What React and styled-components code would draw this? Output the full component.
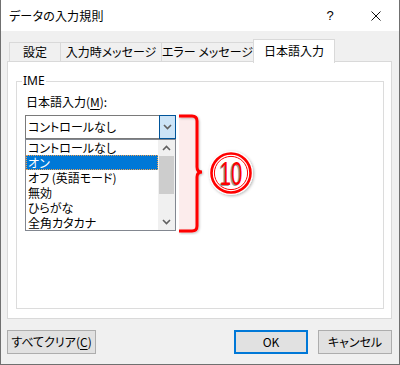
import React from "react";
import styled, { createGlobalStyle } from "styled-components";

const Global = createGlobalStyle`
  html, body { margin: 0; padding: 0; background: #fff; }
  * { box-sizing: border-box; }
  body {
    font-family: "Noto Sans CJK JP", "Noto Sans", sans-serif;
    font-size: 12px;
    color: #000;
    font-feature-settings: "palt";
  }
`;

const Window = styled.div`
  width: 400px;
  height: 365px;
  border: 1px solid #707070;
  border-top: none;
  display: flex;
  flex-direction: column;
  background: #f0f0f0;
`;

const TitleBar = styled.div`
  height: 31px;
  background: #fff;
  display: flex;
  align-items: center;
  padding-left: 8px;
`;

const Title = styled.div`
  flex: 1;
  font-size: 12px;
  line-height: 16px;
  letter-spacing: 0.2px;
`;

const CaptionButton = styled.div`
  width: 46px;
  height: 31px;
  display: flex;
  align-items: center;
  justify-content: center;
  font-family: "Liberation Sans", sans-serif;
  font-size: 13px;
`;

const Body = styled.div`
  flex: 1;
  display: flex;
  flex-direction: column;
  padding: 8px 7px 0 6px;
`;

const TabStrip = styled.div`
  display: flex;
  align-items: flex-end;
  height: 23px;
  padding-left: 2px;
`;

const Tab = styled.div`
  position: relative;
  width: ${(p) => p.$w}px;
  height: ${(p) => (p.$active ? 24 : 20)}px;
  margin-left: -1px;
  margin-bottom: ${(p) => (p.$active ? -1 : 0)}px;
  z-index: ${(p) => (p.$active ? 2 : 1)};
  background: ${(p) => (p.$active ? "#fff" : "#f0f0f0")};
  border: 1px solid #d9d9d9;
  border-bottom: ${(p) => (p.$active ? "none" : "1px solid #d9d9d9")};
  display: flex;
  align-items: ${(p) => (p.$active ? "flex-start" : "center")};
  justify-content: center;
  padding-top: ${(p) => (p.$active ? 3 : 0)}px;
  font-size: 12px;
  line-height: 16px;
  white-space: nowrap;
  &:first-child { margin-left: 0; }
`;

const Panel = styled.div`
  height: 258px;
  margin-top: -1px;
  background: #fff;
  border: 1px solid #d9d9d9;
  padding: 19px 7px 0 8px;
`;

const Group = styled.div`
  position: relative;
  height: 228px;
  border: 1px solid #dcdcdc;
  padding: 12px 8px 0 8px;
`;

const Legend = styled.div`
  position: absolute;
  top: -9px;
  left: 5px;
  padding: 0 1px;
  background: #fff;
  font-size: 12px;
  line-height: 16px;
  font-family: "Noto Sans", sans-serif;
`;

const FieldLabel = styled.div`
  padding-left: 1px;
  font-size: 12px;
  line-height: 16px;
  height: 16px;
  u { text-decoration: underline; text-underline-offset: 2px; }
`;

const ComboRow = styled.div`
  display: flex;
  align-items: flex-start;
  margin-top: 5px;
`;

const ComboCol = styled.div`
  width: 151px;
  display: flex;
  flex-direction: column;
`;

const Combo = styled.div`
  height: 24px;
  border: 1px solid #7a7a7a;
  background: #fff;
  display: flex;
  align-items: stretch;
`;

const ComboText = styled.div`
  flex: 1;
  padding-left: 2px;
  display: flex;
  align-items: center;
  font-size: 12px;
  line-height: 16px;
`;

const DropButton = styled.div`
  width: 17px;
  margin: -1px -1px -1px 0;
  background: #cce4f7;
  border: 1px solid #005499;
  display: flex;
  align-items: center;
  justify-content: center;
`;

const List = styled.div`
  height: 92px;
  border: 1px solid #828790;
  background: #fff;
  display: flex;
`;

const Items = styled.div`
  flex: 1;
  display: flex;
  flex-direction: column;
`;

const Item = styled.div`
  height: 15px;
  line-height: 15px;
  padding-left: 2px;
  font-size: 12px;
  white-space: nowrap;
  overflow: hidden;
  outline: ${(p) => (p.$selected ? "1px dotted #f0a050" : "none")};
  outline-offset: -1px;
  background: ${(p) => (p.$selected ? "#0078d7" : "transparent")};
  color: ${(p) => (p.$selected ? "#fff" : "#000")};
`;

const ScrollBar = styled.div`
  width: 17px;
  background: #f0f0f0;
  display: flex;
  flex-direction: column;
`;

const ScrollArrow = styled.div`
  height: 16px;
  display: flex;
  align-items: center;
  justify-content: center;
`;

const ScrollTrack = styled.div`
  flex: 1;
  padding: 0 1px;
`;

const Thumb = styled.div`
  height: 38px;
  background: #cdcdcd;
`;

const Bracket = styled.svg`
  margin-left: 1px;
  margin-top: -2px;
  flex: none;
`;

const Badge = styled.svg`
  margin-left: 2px;
  margin-top: 34px;
  flex: none;
  overflow: visible;
`;

const ButtonRow = styled.div`
  display: flex;
  margin-top: 11px;
  gap: 10px;
`;

const Button = styled.div`
  width: ${(p) => p.$w}px;
  height: 24px;
  background: #e1e1e1;
  border: ${(p) => (p.$default ? "2px solid #0078d7" : "1px solid #adadad")};
  display: flex;
  align-items: center;
  justify-content: center;
  font-size: 12px;
  line-height: 16px;
  u { text-decoration: underline; text-underline-offset: 2px; }
`;

const Spacer = styled.div`
  flex: 1;
`;

const Chevron = ({ up }) => (
  <svg width="9" height="6" viewBox="0 0 9 6">
    <path
      d={up ? "M1 5 L4.5 1.5 L8 5" : "M1 1 L4.5 4.5 L8 1"}
      fill="none"
      stroke="#606060"
      strokeWidth="1.6"
    />
  </svg>
);

const tabs = [
  { label: "設定", w: 52 },
  { label: "入力時メッセージ", w: 102 },
  { label: "エラー メッセージ", w: 93 },
  { label: "日本語入力", w: 82, active: true },
];

const items = ["コントロールなし", "オン", "オフ (英語モード)", "無効", "ひらがな", "全角カタカナ"];

export default function App() {
  return (
    <>
      <Global />
      <Window>
        <TitleBar>
          <Title>データの入力規則</Title>
          <CaptionButton>?</CaptionButton>
          <CaptionButton>
            <svg width="10" height="10" viewBox="0 0 10 10">
              <path d="M0.5 0.5 L9.5 9.5 M9.5 0.5 L0.5 9.5" stroke="#111" strokeWidth="1" />
            </svg>
          </CaptionButton>
        </TitleBar>
        <Body>
          <TabStrip>
            {tabs.map((t) => (
              <Tab key={t.label} $w={t.w} $active={t.active}>
                {t.label}
              </Tab>
            ))}
          </TabStrip>
          <Panel>
            <Group>
              <Legend>IME</Legend>
              <FieldLabel>
                日本語入力(<u>M</u>):
              </FieldLabel>
              <ComboRow>
                <ComboCol>
                  <Combo>
                    <ComboText>コントロールなし</ComboText>
                    <DropButton>
                      <Chevron />
                    </DropButton>
                  </Combo>
                  <List>
                    <Items>
                      {items.map((it, i) => (
                        <Item key={it} $selected={i === 1}>
                          {it}
                        </Item>
                      ))}
                    </Items>
                    <ScrollBar>
                      <ScrollArrow>
                        <Chevron up />
                      </ScrollArrow>
                      <ScrollTrack>
                        <Thumb />
                      </ScrollTrack>
                      <ScrollArrow>
                        <Chevron />
                      </ScrollArrow>
                    </ScrollBar>
                  </List>
                </ComboCol>
                <Bracket width="28" height="122" viewBox="0 0 28 122">
                  <defs>
                    <filter id="bsh" x="-30%" y="-10%" width="160%" height="120%">
                      <feDropShadow dx="1" dy="1" stdDeviation="1" floodColor="#000" floodOpacity="0.25" />
                    </filter>
                  </defs>
                  <rect x="2" y="4" width="18" height="114" fill="#fcecec" />
                  <path
                    d="M2 3 H15 Q20 3 20 8 V54 Q20 59 25 59 Q20 59 20 64 V113 Q20 118 15 118 H2"
                    fill="none"
                    stroke="#ff0000"
                    strokeWidth="3"
                    filter="url(#bsh)"
                  />
                </Bracket>
                <Badge width="48" height="48" viewBox="0 0 48 48">
                  <defs>
                    <filter id="csh" x="-30%" y="-30%" width="160%" height="160%">
                      <feDropShadow dx="1" dy="1" stdDeviation="1.5" floodColor="#000" floodOpacity="0.3" />
                    </filter>
                  </defs>
                  <circle cx="24" cy="24" r="22" fill="#fff" filter="url(#csh)" />
                  <circle cx="24" cy="24" r="19.5" fill="none" stroke="#ff0000" strokeWidth="2.6" />
                  <circle cx="24" cy="24" r="16.6" fill="none" stroke="#ff0000" strokeWidth="1" />
                  <g transform="translate(24 36) scale(0.6 1)">
                    <text
                      x="-2.5"
                      y="0.5"
                      textAnchor="middle"
                      fontFamily="Liberation Sans, sans-serif"
                      fontSize="34"
                      fill="#9a9a9a"
                    >
                      10
                    </text>
                    <text
                      x="0"
                      y="0"
                      textAnchor="middle"
                      fontFamily="Liberation Sans, sans-serif"
                      fontSize="34"
                      fill="#ff0000"
                    >
                      10
                    </text>
                  </g>
                </Badge>
              </ComboRow>
            </Group>
          </Panel>
          <ButtonRow>
            <Button $w={89}>
              すべてクリア(<u>C</u>)
            </Button>
            <Spacer />
            <Button $w={74} $default>
              OK
            </Button>
            <Button $w={74}>キャンセル</Button>
          </ButtonRow>
        </Body>
      </Window>
    </>
  );
}
